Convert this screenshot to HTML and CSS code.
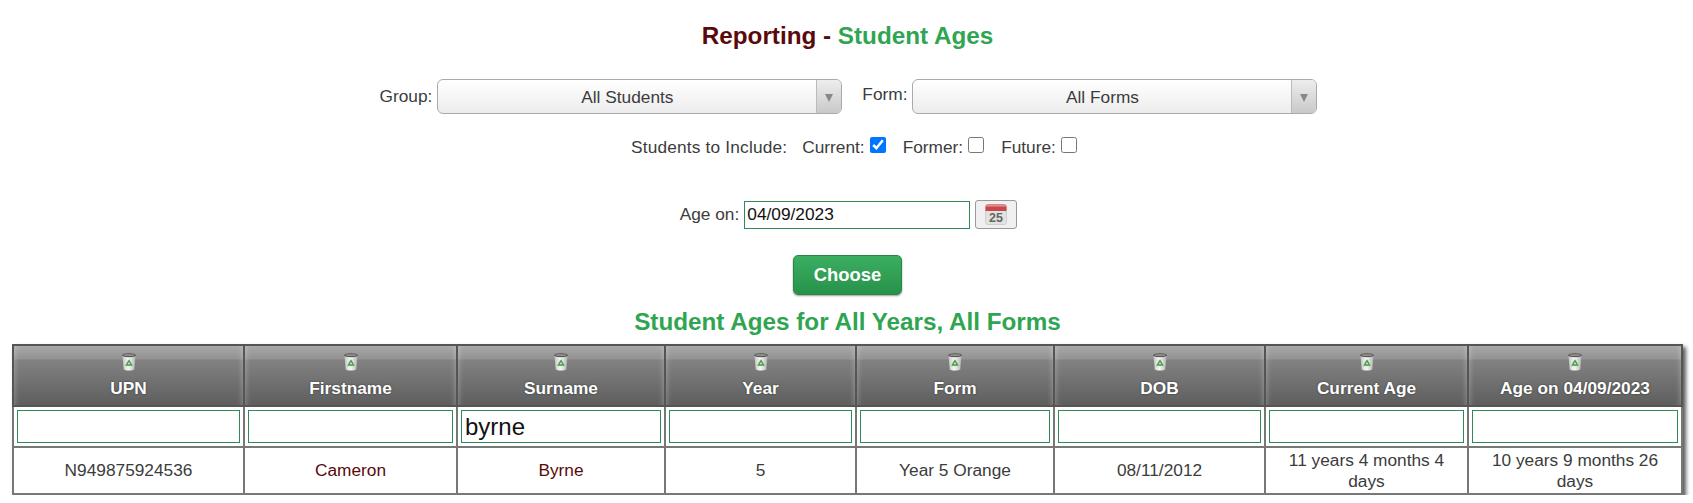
FILE: index.html
```html
<!DOCTYPE html>
<html lang="en">
<head>
    <meta charset="UTF-8">
    <meta name="viewport" content="width=device-width, initial-scale=1.0">
    <title>Reporting - Student Ages</title>
    <link rel="stylesheet" href="styles.css">
</head>
<body>
    <svg class="icon-defs" width="0" height="0" aria-hidden="true">
        <defs>
            <linearGradient id="can" x1="0" x2="1" y1="0" y2="0">
                <stop offset="0" stop-color="#c4c8c4"/>
                <stop offset="0.45" stop-color="#f6f8f4"/>
                <stop offset="1" stop-color="#b4b7b3"/>
            </linearGradient>
            <symbol id="trash" viewBox="0 0 14 18">
                <ellipse cx="7" cy="2.4" rx="6.8" ry="2.2" fill="#4f4f4f"/>
                <ellipse cx="7" cy="2.1" rx="5.6" ry="1.2" fill="#8c8c8c"/>
                <path d="M0.6 3.2 L1.8 16.4 Q7 18.8 12.2 16.4 L13.4 3.2 Q7 5.4 0.6 3.2 Z" fill="url(#can)"/>
                <circle cx="7" cy="10.4" r="3.2" fill="#d4e6d2"/>
                <path d="M7 7.6 L9.6 12 L4.4 12 Z" fill="none" stroke="#4d9a4d" stroke-width="1.4"/>
            </symbol>
        </defs>
    </svg>

    <main class="page">
        <h1 class="page-title">Reporting - <span>Student Ages</span></h1>

        <div class="filter-row">
            <label class="field-label">Group:</label>
            <div class="combo">
                <span class="combo-text">All Students</span>
                <span class="combo-arrow"></span>
            </div>
            <label class="field-label form-label">Form:</label>
            <div class="combo">
                <span class="combo-text">All Forms</span>
                <span class="combo-arrow"></span>
            </div>
        </div>

        <div class="include-row">
            <span class="include-title">Students to Include:</span>
            <label class="include-item">Current:<input type="checkbox" checked></label>
            <label class="include-item">Former:<input type="checkbox"></label>
            <label class="include-item">Future:<input type="checkbox"></label>
        </div>

        <div class="date-row">
            <label class="field-label">Age on:</label>
            <input class="date-input" type="text" value="04/09/2023">
            <button class="cal-button" type="button" aria-label="Pick a date">
                <svg width="22" height="21" viewBox="0 0 22 21">
                    <rect x="0.5" y="0.5" width="21" height="20" rx="2" fill="#e2e2df" stroke="#cfcfcf"/>
                    <path d="M0.5 7 V2.5 a2 2 0 0 1 2 -2 h17 a2 2 0 0 1 2 2 V7 Z" fill="#c9474b"/>
                    <rect x="1" y="1" width="20" height="1.6" fill="#e58a8a"/>
                    <text x="11" y="18" text-anchor="middle" class="cal-day">25</text>
                </svg>
            </button>
        </div>

        <button class="choose" type="button">Choose</button>

        <h2 class="report-title">Student Ages for All Years, All Forms</h2>

        <table class="report">
            <colgroup>
                <col class="c-upn"><col class="c-first"><col class="c-sur"><col class="c-year">
                <col class="c-form"><col class="c-dob"><col class="c-cur"><col class="c-age">
            </colgroup>
            <thead>
                <tr class="head-row">
                    <th><svg class="trash"><use href="#trash"/></svg>UPN</th>
                    <th><svg class="trash"><use href="#trash"/></svg>Firstname</th>
                    <th><svg class="trash"><use href="#trash"/></svg>Surname</th>
                    <th><svg class="trash"><use href="#trash"/></svg>Year</th>
                    <th><svg class="trash"><use href="#trash"/></svg>Form</th>
                    <th><svg class="trash"><use href="#trash"/></svg>DOB</th>
                    <th><svg class="trash"><use href="#trash"/></svg>Current Age</th>
                    <th><svg class="trash"><use href="#trash"/></svg>Age on 04/09/2023</th>
                </tr>
                <tr class="search-row">
                    <td><input type="text"></td>
                    <td><input type="text"></td>
                    <td><input type="text" value="byrne"></td>
                    <td><input type="text"></td>
                    <td><input type="text"></td>
                    <td><input type="text"></td>
                    <td><input type="text"></td>
                    <td><input type="text"></td>
                </tr>
            </thead>
            <tbody>
                <tr class="data-row">
                    <td>N949875924536</td>
                    <td class="name">Cameron</td>
                    <td class="name">Byrne</td>
                    <td>5</td>
                    <td>Year 5 Orange</td>
                    <td>08/11/2012</td>
                    <td>11 years 4 months 4 days</td>
                    <td>10 years 9 months 26 days</td>
                </tr>
            </tbody>
        </table>
    </main>
</body>
</html>
```

FILE: styles.css
```css
body {
    font-family: 'Liberation Sans', Arial, sans-serif;
    font-size: 17.3px;
    margin: 0;
    padding: 0;
    background: white;
    color: #3c3c3c;
}
.icon-defs {
    display: block;
    height: 0;
}
.page {
    width: 1671px;
    margin-left: 12px;
    display: flex;
    flex-direction: column;
    align-items: center;
}
.page-title {
    margin: 22px 0 0;
    height: 28px;
    line-height: 28px;
    font-size: 24.25px;
    font-weight: bold;
    color: #5a0a0a;
}
.page-title span {
    color: #2fa551;
}
.filter-row {
    margin-top: 29px;
    padding-left: 2px;
    height: 35px;
    display: flex;
    align-items: center;
}
.field-label {
    margin-right: 5px;
}
.form-label {
    margin-left: 20px;
    position: relative;
    top: -2px;
}
.combo {
    width: 405px;
    height: 35px;
    box-sizing: border-box;
    border: 1px solid #aaa;
    border-radius: 6px;
    background: linear-gradient(to bottom, #ffffff, #ececec);
    display: flex;
    overflow: hidden;
}
.combo-text {
    flex: 1;
    text-align: center;
    line-height: 34px;
}
.combo-arrow {
    width: 24px;
    border-left: 1px solid #bbb;
    background: linear-gradient(to bottom, #ededed, #c9c9c9);
    display: flex;
    align-items: center;
    justify-content: center;
}
.combo-arrow::after {
    content: "";
    margin-top: 3px;
    border-left: 4.5px solid transparent;
    border-right: 4.5px solid transparent;
    border-top: 8px solid #888;
}
.include-row {
    margin-top: 20px;
    padding-left: 13px;
    height: 26px;
    display: flex;
    align-items: center;
}
.include-title {
    margin-right: 15px;
    letter-spacing: 0.17px;
}
.include-item {
    display: flex;
    align-items: center;
    margin-right: 17px;
}
.include-item:last-child {
    margin-right: 0;
}
.include-item input {
    width: 16px;
    height: 16px;
    margin: -4px 0 0 5px;
}
.date-row {
    margin-top: 40px;
    padding-left: 2px;
    height: 29px;
    display: flex;
    align-items: center;
}
.date-input {
    width: 226px;
    height: 28px;
    box-sizing: border-box;
    border: 1px solid #2e8b57;
    padding: 0 2px;
    font-family: inherit;
    font-size: 17.3px;
    color: #111;
    outline: none;
}
.cal-button {
    width: 42px;
    height: 29px;
    margin-left: 5px;
    padding: 0;
    border: 1px solid #999;
    border-radius: 3px;
    background: #f0f0f0;
    display: flex;
    align-items: center;
    justify-content: center;
}
.cal-day {
    font-family: 'Liberation Sans', Arial, sans-serif;
    font-size: 12.5px;
    font-weight: bold;
    fill: #666;
}
.choose {
    margin-top: 26px;
    width: 109px;
    height: 40px;
    border: 1px solid #27864a;
    border-radius: 5px;
    background: linear-gradient(to bottom, #3bae61, #27924a);
    box-shadow: 0 1px 2px rgba(0, 0, 0, 0.4);
    color: white;
    font-family: inherit;
    font-size: 18.4px;
    font-weight: bold;
}
.report-title {
    margin: 13px 0 0;
    height: 27px;
    line-height: 27px;
    font-size: 24.25px;
    font-weight: bold;
    color: #2fa551;
}
.report {
    margin-top: 9px;
    width: 1669px;
    height: 150px;
    table-layout: fixed;
    border-collapse: collapse;
    border: 2px solid #777;
    box-shadow: 3px 3px 4px rgba(0, 0, 0, 0.65);
}
.c-upn { width: 231px; }
.c-first { width: 213px; }
.c-sur { width: 208px; }
.c-year { width: 191px; }
.c-form { width: 198px; }
.c-dob { width: 211px; }
.c-cur { width: 203px; }
.c-age { width: 214px; }
.report th,
.report td {
    border: 2px solid #777;
    padding: 0;
    text-align: center;
}
.report th {
    border-color: #555;
    color: white;
    font-size: 17.3px;
    font-weight: bold;
    vertical-align: top;
    text-shadow: 0 0 2px rgba(0, 0, 0, 0.6);
    background: linear-gradient(to bottom, #a8a8a8 0, #929292 13px, #828282 14px, #5e5e5e 100%);
    box-shadow: inset 6px 0 6px -6px rgba(255, 255, 255, 0.35), inset -6px 0 6px -6px rgba(255, 255, 255, 0.35);
}
.trash {
    display: block;
    width: 14px;
    height: 18px;
    margin: 7px auto 7px;
}
.head-row {
    height: 61px;
}
.search-row {
    height: 41px;
}
.search-row td {
    padding: 0 3px;
}
.search-row input {
    display: block;
    width: 100%;
    height: 33px;
    box-sizing: border-box;
    border: 1px solid #2e8b57;
    padding: 0 3px;
    font-family: inherit;
    font-size: 24px;
    color: #111;
    outline: none;
}
.data-row {
    height: 47px;
}
.data-row td {
    padding: 0 8px;
    line-height: 21px;
}
.name {
    color: #5a0a0a;
}
```
